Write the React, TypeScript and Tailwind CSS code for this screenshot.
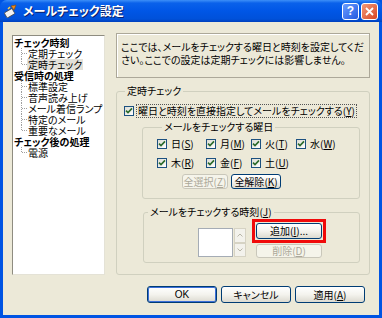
import type { ReactNode } from 'react';

// ============================================================
// Windows XP 風「メールチェック設定」ダイアログ
// ============================================================

const jp = "font-['Noto_Sans_CJK_JP','Noto_Sans',sans-serif] [font-feature-settings:'palt']";

function Check({ checked = true }: { checked?: boolean }) {
  return (
    <span className="w-[10px] h-[10px] shrink-0 border border-[#1c5180] bg-gradient-to-br from-[#dcdcd4] to-white flex items-center justify-center">
      {checked && (
        <svg width="8" height="8" viewBox="0 0 8 8">
          <path d="M1 3.6 L3 5.6 L7 1.4" stroke="#2a6a2a" strokeWidth="1.6" fill="none" />
        </svg>
      )}
    </span>
  );
}

function Mn({ c }: { c: string }) {
  return (
    <>
      (<span className="underline underline-offset-[1px]">{c}</span>)
    </>
  );
}

function Day({ label, k }: { label: string; k: string }) {
  return (
    <div className="flex items-center gap-[4px] h-[19px] whitespace-nowrap">
      <Check />
      <span>
        {label}
        <Mn c={k} />
      </span>
    </div>
  );
}

function Btn({
  children,
  disabled,
  isDefault,
  className = '',
}: {
  children: ReactNode;
  disabled?: boolean;
  isDefault?: boolean;
  className?: string;
}) {
  const base = 'flex items-center justify-center rounded-[3px] border leading-none whitespace-nowrap';
  const look = disabled
    ? 'border-[#c9c7ba] bg-[#f5f4ea] text-[#aca899]'
    : 'border-[#003c74] bg-gradient-to-b from-white via-[#f4f3ee] to-[#dcdad0] text-black';
  const ring = isDefault ? 'shadow-[inset_0_0_0_1px_#3c6fd8]' : '';
  return <div className={`${base} ${look} ${ring} ${className}`}>{children}</div>;
}

// 木構造の点線
function Branch({ last }: { last?: boolean }) {
  return (
    <svg width="8" height="11" className="shrink-0">
      <line x1="2.5" y1="0" x2="2.5" y2={last ? 6 : 11} stroke="#a0a0a0" strokeDasharray="1 1" />
      <line x1="3" y1="5.5" x2="8" y2="5.5" stroke="#a0a0a0" strokeDasharray="1 1" />
    </svg>
  );
}

function TreeGroup({ title, items, selected }: { title: string; items: string[]; selected?: string }) {
  return (
    <div>
      <div className="h-[11px] font-bold leading-[11px]">{title}</div>
      {items.map((it, i) => (
        <div key={it} className="flex h-[11px] items-center pl-[5px] leading-[11px]">
          <Branch last={i === items.length - 1} />
          <span className={`px-[1px] ${it === selected ? 'bg-[#e2e1da]' : ''}`}>{it}</span>
        </div>
      ))}
    </div>
  );
}

function TitleBar() {
  return (
    <div className="h-[22px] flex items-center rounded-t-[7px] px-[4px] bg-[linear-gradient(180deg,#3d8ff8_0%,#0a61ea_14%,#0056e6_50%,#0051da_86%,#0040bd_100%)]">
      <svg width="14" height="14" viewBox="0 0 14 14" className="shrink-0">
        <rect x="1" y="6" width="9" height="6" rx="1" fill="#f2f2f2" stroke="#4a4a4a" strokeWidth="0.8" transform="rotate(-30 6 9)" />
        <path d="M7 2 L12 1 L10 6 Z" fill="#f08a1c" stroke="#8a4a00" strokeWidth="0.6" />
        <path d="M4 5 L6 3" stroke="#ffd24a" strokeWidth="1.4" />
      </svg>
      <span className="ml-[5px] text-[12px] font-bold text-white [text-shadow:1px_1px_0_#0a1f6a] leading-none">
        メールチェック設定
      </span>
      <div className="ml-auto flex gap-[2px]">
        <div className="w-[17px] h-[17px] rounded-[3px] border border-white bg-gradient-to-br from-[#6b9cff] to-[#2358e0] flex items-center justify-center text-white font-bold text-[12px] leading-none font-['Liberation_Sans',sans-serif]">
          ?
        </div>
        <div className="w-[17px] h-[17px] rounded-[3px] border border-white bg-gradient-to-br from-[#f09878] to-[#d8431e] flex items-center justify-center">
          <svg width="9" height="9" viewBox="0 0 9 9">
            <path d="M1 1 L8 8 M8 1 L1 8" stroke="white" strokeWidth="1.8" />
          </svg>
        </div>
      </div>
    </div>
  );
}

export default function App() {
  return (
    <div className={`w-[382px] h-[318px] flex flex-col bg-[#0054e3] text-[10px] text-black whitespace-nowrap ${jp}`}>
      <TitleBar />

      <div className="flex-1 mx-[3px] mb-[3px] bg-[#ece9d8] flex flex-col px-[9px] pt-[11px]">
        <div className="flex gap-[11px] h-[242px]">
          {/* ツリー */}
          <div className="w-[93px] h-[240px] mt-[2px] bg-white border-t border-l border-[#8e8c80] border-r border-b border-r-[#e4e2d6] border-b-[#e4e2d6] pl-[1px] pt-[1px]">
            <TreeGroup title="チェック時刻" items={['定期チェック', '定時チェック']} selected="定時チェック" />
            <TreeGroup
              title="受信時の処理"
              items={['標準設定', '音声読み上げ', 'メール着信ランプ', '特定のメール', '重要なメール']}
            />
            <TreeGroup title="チェック後の処理" items={['電源']} />
          </div>

          {/* 右側 */}
          <div className="w-[254px] flex flex-col">
            <div className="h-[45px] border border-[#aca899] shadow-[inset_1px_1px_0_#fff] pl-[4px] pt-[6px] leading-[13px]">
              ここでは、メールをチェックする曜日と時刻を設定してくだ
              <br />
              さい。ここでの設定は定期チェックには影響しません。
            </div>

            <fieldset className="mt-[7px] h-[190px] border border-[#d0d0bf] rounded-[3px] pl-[7px] pr-[9px]">
              <legend className="ml-[1px] px-[2px] leading-[12px]">定時チェック</legend>

              <div className="mt-[8px] flex items-center gap-[3px]">
                <Check />
                <span className="outline outline-1 outline-dotted outline-[#555] px-[1px] leading-[12px]">
                  曜日と時刻を直接指定してメールをチェックする<Mn c="Y" />
                </span>
              </div>

              <fieldset className="mt-[4px] ml-[18px] h-[78px] border border-[#d0d0bf] rounded-[3px] pl-[14px]">
                <legend className="ml-[5px] px-[2px] leading-[12px]">メールをチェックする曜日</legend>
                <div className="grid grid-cols-[49px_45px_45px_45px] mt-[1px]">
                  <Day label="日" k="S" />
                  <Day label="月" k="M" />
                  <Day label="火" k="T" />
                  <Day label="水" k="W" />
                  <Day label="木" k="R" />
                  <Day label="金" k="F" />
                  <Day label="土" k="U" />
                </div>
                <div className="flex gap-[3px] ml-[25px] mt-[2px]">
                  <Btn disabled className="w-[46px] h-[15px]">
                    <span>
                      全選択<Mn c="Z" />
                    </span>
                  </Btn>
                  <Btn className="w-[50px] h-[15px]">
                    <span>
                      全解除<Mn c="K" />
                    </span>
                  </Btn>
                </div>
              </fieldset>

              <fieldset className="mt-[7px] ml-[19px] h-[57px] border border-[#d0d0bf] rounded-[3px]">
                <legend className="ml-[4px] px-[2px] leading-[12px]">
                  メールをチェックする時刻<Mn c="J" />
                </legend>
                <div className="flex ml-[54px] mt-[1px]">
                  <div className="mt-[9px] flex">
                    <div className="w-[35px] h-[29px] bg-white border border-[#a5acb5]" />
                    <div className="flex flex-col w-[12px] h-[29px] ml-[1px]">
                      <div className="flex-1 border border-[#d6d3c4] bg-[#f3f2ec] flex items-center justify-center">
                        <svg width="6" height="4" viewBox="0 0 6 4">
                          <path d="M0.5 3.5 L3 1 L5.5 3.5" stroke="#b8b6a8" fill="none" />
                        </svg>
                      </div>
                      <div className="flex-1 border border-[#d6d3c4] bg-[#f3f2ec] flex items-center justify-center">
                        <svg width="6" height="4" viewBox="0 0 6 4">
                          <path d="M0.5 0.5 L3 3 L5.5 0.5" stroke="#b8b6a8" fill="none" />
                        </svg>
                      </div>
                    </div>
                  </div>
                  <div className="ml-[6px] flex flex-col">
                    <div className="border-[3px] border-[#f00a0a] p-[1px]">
                      <Btn className="w-[66px] h-[16px]">
                        <span>
                          追加<Mn c="I" />...
                        </span>
                      </Btn>
                    </div>
                    <Btn disabled className="ml-[4px] mt-[1px] w-[66px] h-[14px]">
                      <span>
                        削除<Mn c="D" />
                      </span>
                    </Btn>
                  </div>
                </div>
              </fieldset>
            </fieldset>
          </div>
        </div>

        {/* 下部ボタン */}
        <div className="mt-[11px] mr-[5px] flex justify-end gap-[4px]">
          <Btn isDefault className="w-[70px] h-[17px] font-['Liberation_Sans',sans-serif]">
            OK
          </Btn>
          <Btn className="w-[70px] h-[17px]">キャンセル</Btn>
          <Btn className="w-[70px] h-[17px]">
            <span>
              適用<Mn c="A" />
            </span>
          </Btn>
        </div>
      </div>
    </div>
  );
}
